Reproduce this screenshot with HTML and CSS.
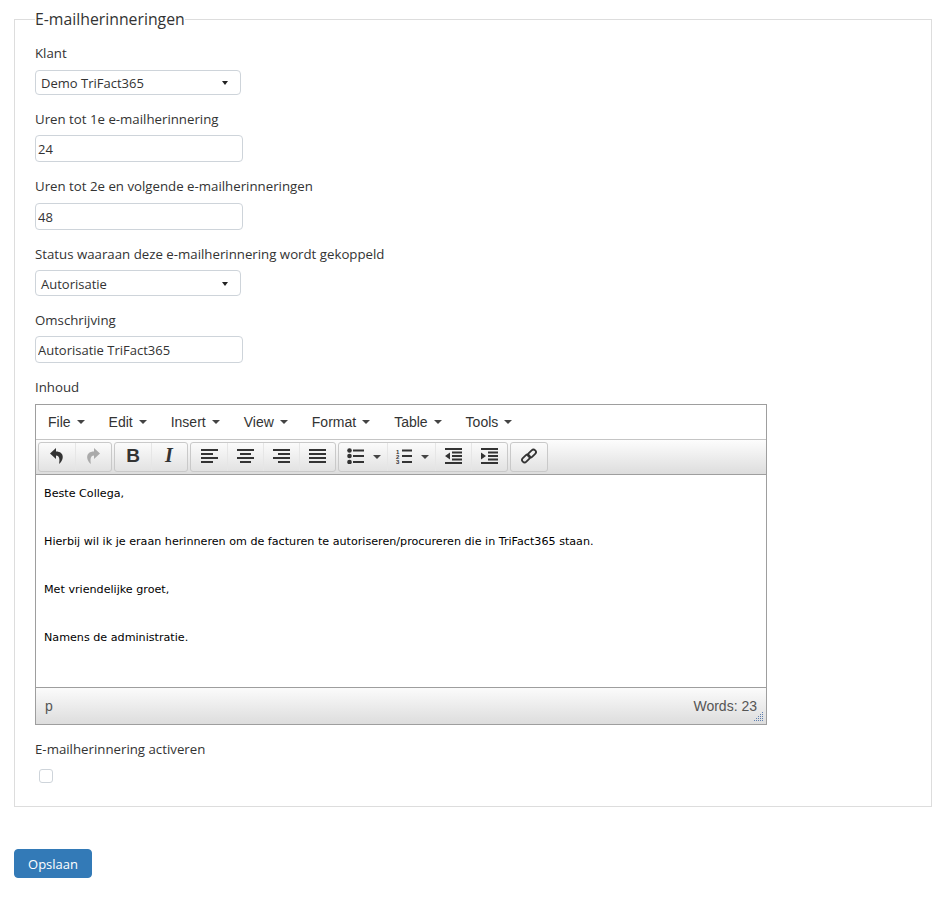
FILE: index.html
```html
<!DOCTYPE html>
<html lang="nl">

<head>
    <meta charset="UTF-8" />
    <title>E-mailherinneringen</title>
    <link rel="stylesheet" href="styles.css">
</head>

<body>
    <form class="page">
        <fieldset class="panel">
            <legend>E-mailherinneringen</legend>

            <div class="veld">
                <label>Klant</label>
                <div class="keuze"><span>Demo TriFact365</span><i class="caret"></i></div>
            </div>

            <div class="veld veld-laag">
                <label>Uren tot 1e e-mailherinnering</label>
                <input class="tekstveld" type="text" value="24">
            </div>

            <div class="veld">
                <label>Uren tot 2e en volgende e-mailherinneringen</label>
                <input class="tekstveld" type="text" value="48">
            </div>

            <div class="veld veld-laag">
                <label>Status waaraan deze e-mailherinnering wordt gekoppeld</label>
                <div class="keuze keuze-hoog"><span>Autorisatie</span><i class="caret"></i></div>
            </div>

            <div class="veld veld-laag">
                <label>Omschrijving</label>
                <input class="tekstveld" type="text" value="Autorisatie TriFact365">
            </div>

            <div class="veld">
                <label>Inhoud</label>
                <div class="editor">
                    <div class="menubar">
                        <span class="menu">File<i class="caret-menu"></i></span>
                        <span class="menu">Edit<i class="caret-menu"></i></span>
                        <span class="menu">Insert<i class="caret-menu"></i></span>
                        <span class="menu">View<i class="caret-menu"></i></span>
                        <span class="menu">Format<i class="caret-menu"></i></span>
                        <span class="menu">Table<i class="caret-menu"></i></span>
                        <span class="menu">Tools<i class="caret-menu"></i></span>
                    </div>

                    <div class="toolbar">
                        <div class="groep">
                            <button type="button" class="knop">
                                <svg viewBox="0 0 16 16"><path d="M7 0 1 5.500 7 11V7.500c3 0 4.200 3 3 8.500C15 12.500 16 3.500 7 3.500z" /></svg>
                            </button>
                            <button type="button" class="knop knop-uit">
                                <svg viewBox="0 0 16 16"><path d="M9 0l6 5.500L9 11V7.500c-3 0-4.200 3-3 8.500C1 12.500 0 3.500 9 3.500z" /></svg>
                            </button>
                        </div>
                        <div class="groep">
                            <button type="button" class="knop knop-b">B</button>
                            <button type="button" class="knop knop-i">I</button>
                        </div>
                        <div class="groep">
                            <button type="button" class="knop">
                                <svg class="icoon-breed" viewBox="0 0 17 16"><path d="M0 1h17v2H0zM0 5h12v2H0zM0 9h17v2H0zM0 13h12v2H0z" /></svg>
                            </button>
                            <button type="button" class="knop">
                                <svg class="icoon-breed" viewBox="0 0 17 16"><path d="M0 1h17v2H0zM3 5h11v2H3zM0 9h17v2H0zM3 13h11v2H3z" /></svg>
                            </button>
                            <button type="button" class="knop">
                                <svg class="icoon-breed" viewBox="0 0 17 16"><path d="M0 1h17v2H0zM5 5h12v2H5zM0 9h17v2H0zM5 13h12v2H5z" /></svg>
                            </button>
                            <button type="button" class="knop">
                                <svg class="icoon-breed" viewBox="0 0 17 16"><path d="M0 1h17v2H0zM0 5h17v2H0zM0 9h17v2H0zM0 13h17v2H0z" /></svg>
                            </button>
                        </div>
                        <div class="groep">
                            <button type="button" class="knop knop-split">
                                <svg class="icoon-breed" viewBox="0 0 17 16">
                                    <circle cx="2.500" cy="2.500" r="2.300" />
                                    <circle cx="2.500" cy="8" r="2.300" />
                                    <circle cx="2.500" cy="14" r="2.300" />
                                    <path d="M6 1.500h11v2H6zM6 7h11v2H6zM6 13h11v2H6z" />
                                </svg>
                                <i class="caret-split"></i>
                            </button>
                            <button type="button" class="knop knop-split">
                                <svg class="icoon-breed" viewBox="0 0 17 16">
                                    <text x="1" y="5.500" class="cijfer">1</text>
                                    <text x="1" y="11" class="cijfer">2</text>
                                    <text x="1" y="16" class="cijfer">3</text>
                                    <path d="M7 1.500h10v2H7zM7 7h10v2H7zM7 13h10v2H7z" />
                                </svg>
                                <i class="caret-split"></i>
                            </button>
                            <button type="button" class="knop">
                                <svg class="icoon-breed" viewBox="0 0 17 16"><path d="M0 0h17v2H0zM7 3.500h10v2H7zM7 7h10v2H7zM7 10.500h10v2H7zM0 14h17v2H0zM5 4.500v7L0 8z" /></svg>
                            </button>
                            <button type="button" class="knop">
                                <svg class="icoon-breed" viewBox="0 0 17 16"><path d="M0 0h17v2H0zM7 3.500h10v2H7zM7 7h10v2H7zM7 10.500h10v2H7zM0 14h17v2H0zM0 4.500v7L5 8z" /></svg>
                            </button>
                        </div>
                        <div class="groep">
                            <button type="button" class="knop">
                                <svg class="icoon-lijn" viewBox="0 0 16 16">
                                    <rect x="0.500" y="8" width="9" height="5" rx="2.500" transform="rotate(-45 5 10.500)" />
                                    <rect x="6.500" y="3" width="9" height="5" rx="2.500" transform="rotate(-45 11 5.500)" />
                                </svg>
                            </button>
                        </div>
                    </div>

                    <div class="inhoud">
                        <p>Beste Collega,</p>
                        <p>Hierbij wil ik je eraan herinneren om de facturen te autoriseren/procureren die in TriFact365 staan.</p>
                        <p>Met vriendelijke groet,</p>
                        <p>Namens de administratie.</p>
                    </div>

                    <div class="statusbar">
                        <span>p</span>
                        <span class="woorden">Words: 23</span>
                        <svg class="resize" viewBox="0 0 10 10">
                            <path d="M8 0h1v1H8zM6 2h1v1H6zM8 2h1v1H8zM4 4h1v1H4zM6 4h1v1H6zM8 4h1v1H8zM2 6h1v1H2zM4 6h1v1H4zM6 6h1v1H6zM8 6h1v1H8zM0 8h1v1H0zM2 8h1v1H2zM4 8h1v1H4zM6 8h1v1H6zM8 8h1v1H8z" />
                        </svg>
                    </div>
                </div>
            </div>

            <div class="veld veld-check">
                <label>E-mailherinnering activeren</label>
                <span class="vinkje"></span>
            </div>
        </fieldset>

        <button type="button" class="opslaan">Opslaan</button>
    </form>
</body>

</html>
```

FILE: styles.css
```css
* {
    box-sizing: border-box;
}

body {
    margin: 0;
    background-color: #ffffff;
    color: #333333;
    font-family: "Open Sans", "Noto Sans", Arial, sans-serif;
    font-size: 13px;
}

.page {
    padding: 9px 18px 20px 14px;
}

.panel {
    margin: 0;
    height: 798px;
    padding: 14px 20px 0 20px;
    border: 1px solid #dddddd;
}

legend {
    width: auto;
    padding: 0;
    font-size: 15.8px;
    line-height: 20px;
    color: #333333;
}

.veld {
    display: flex;
    flex-direction: column;
    align-items: flex-start;
    margin-bottom: 14px;
}

.veld label {
    font-size: 13.25px;
    line-height: 20px;
    margin-bottom: 7px;
}

.veld-laag label {
    margin-bottom: 6px;
}

.keuze {
    display: flex;
    justify-content: space-between;
    align-items: center;
    width: 206px;
    height: 25px;
    padding: 0 12px 0 5px;
    border: 1px solid #ced4da;
    border-radius: 4px;
    background: #ffffff;
}

.keuze-hoog {
    height: 26px;
    padding-top: 1px;
}

.caret {
    width: 0;
    height: 0;
    border-left: 3px solid transparent;
    border-right: 3px solid transparent;
    border-top: 4px solid #222222;
}

.tekstveld {
    width: 208px;
    height: 27px;
    padding: 0 2px;
    border: 1px solid #ced4da;
    border-radius: 4px;
    font-family: inherit;
    font-size: 13px;
    color: #333333;
}

/* editor */
.editor {
    width: 732px;
    border: 1px solid #9e9e9e;
    font-family: "Liberation Sans", Arial, sans-serif;
}

.menubar {
    display: flex;
    height: 35px;
    align-items: center;
    padding-left: 12px;
    gap: 24px;
    background: #ffffff;
    border-bottom: 1px solid #c5c5c5;
    font-size: 14px;
    color: #333333;
}

.menu {
    display: flex;
    align-items: center;
}

.caret-menu {
    margin-left: 6px;
    border-left: 4px solid transparent;
    border-right: 4px solid transparent;
    border-top: 4px solid #444444;
}

.toolbar {
    display: flex;
    height: 35px;
    gap: 2px;
    padding: 2px 0 0 2px;
    background: linear-gradient(#fdfdfd, #dddddd);
    border-bottom: 1px solid #9e9e9e;
}

.groep {
    display: flex;
    height: 30px;
    border: 1px solid #c9c9c9;
    border-radius: 3px;
    background: linear-gradient(#fbfbfb, #e2e2e2);
}

.knop {
    display: flex;
    align-items: center;
    justify-content: center;
    width: 36px;
    padding: 0 0 3px 0;
    border: none;
    background: none;
    box-shadow: inset 1px 0 #e6e6e6;
    color: #333333;
}

.groep .knop:first-child {
    box-shadow: none;
}

.knop svg {
    width: 16px;
    height: 16px;
    fill: #333333;
}

.knop .icoon-breed {
    width: 17px;
}

.knop-uit svg {
    fill: #aaaaaa;
}

.knop-b {
    font-size: 19px;
    font-weight: bold;
    font-family: "Liberation Sans", Arial, sans-serif;
}

.knop-i {
    font-size: 20px;
    font-style: italic;
    font-weight: bold;
    font-family: "Liberation Serif", "Times New Roman", serif;
}

.knop-split {
    justify-content: flex-start;
    width: 48px;
    padding-left: 8px;
    gap: 9px;
}

.caret-split {
    margin-top: 3px;
    border-left: 4px solid transparent;
    border-right: 4px solid transparent;
    border-top: 4px solid #444444;
}

.cijfer {
    font-family: "Liberation Sans", Arial, sans-serif;
    font-size: 6px;
    font-weight: bold;
}

.knop .icoon-lijn {
    fill: none;
    stroke: #333333;
    stroke-width: 1.8;
}

.inhoud {
    height: 213px;
    padding: 12px 8px 0 8px;
    background: #ffffff;
    border-bottom: 1px solid #9e9e9e;
    font-family: "DejaVu Sans", Verdana, sans-serif;
    font-size: 11.15px;
    color: #000000;
}

.inhoud p {
    margin: 0 0 35px 0;
    line-height: 13px;
}

.statusbar {
    position: relative;
    display: flex;
    justify-content: space-between;
    align-items: center;
    height: 36px;
    padding: 0 9px;
    background: linear-gradient(#fbfbfb, #dddddd);
    font-size: 14px;
    color: #555555;
}

/* hoekje voor het slepen */
.resize {
    position: absolute;
    right: 2px;
    bottom: 2px;
    width: 10px;
    height: 10px;
    fill: #5f7fae;
}

.veld-check label {
    margin-bottom: 10px;
}

.vinkje {
    display: block;
    width: 14px;
    height: 14px;
    margin-left: 4px;
    border: 1px solid #ced4da;
    border-radius: 3px;
}

.opslaan {
    display: block;
    width: 78px;
    height: 29px;
    margin-top: 42px;
    padding: 0;
    border: 1px solid #337ab7;
    border-radius: 4px;
    background-color: #337ab7;
    color: #ffffff;
    font-family: inherit;
    font-size: 13px;
}
```
